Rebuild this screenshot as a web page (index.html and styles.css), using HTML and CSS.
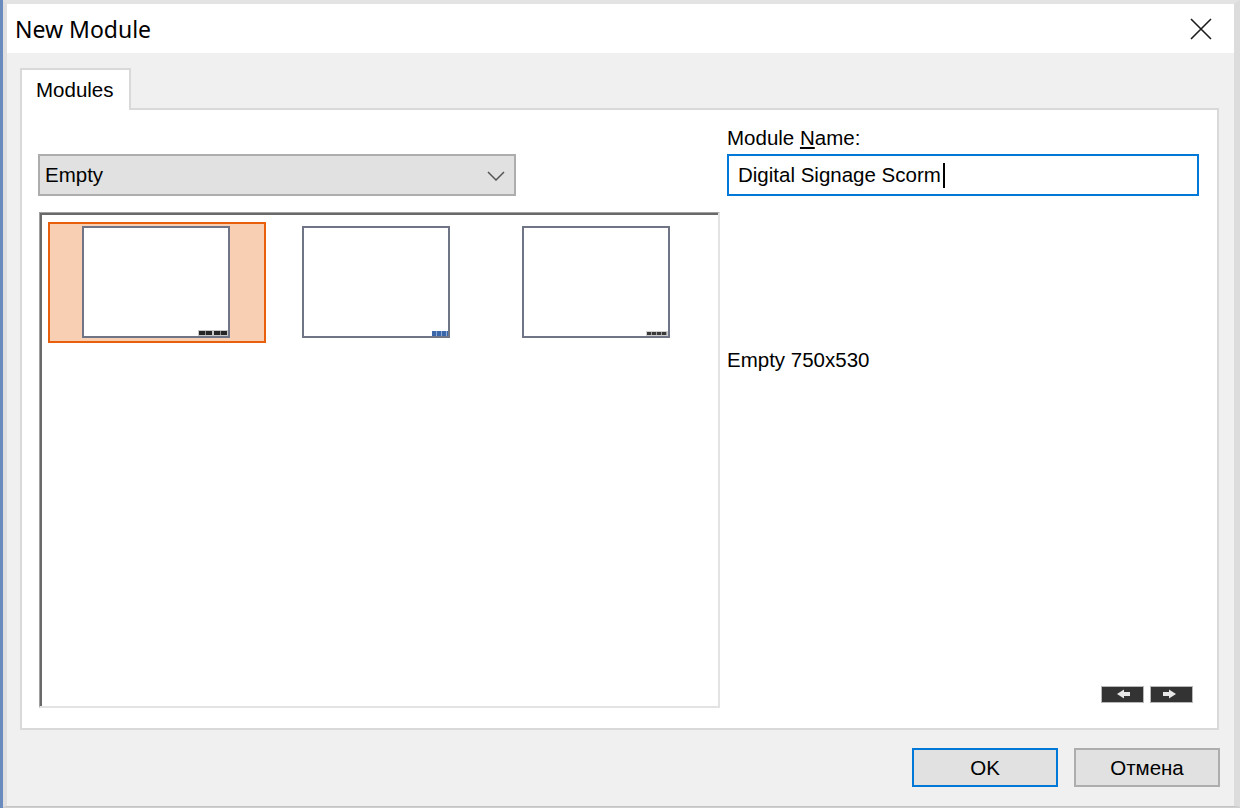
FILE: index.html
```html
<!DOCTYPE html>
<html lang="en">
<head>
<meta charset="utf-8">
<title>New Module</title>
<link rel="stylesheet" href="styles.css">
</head>
<body>
<div class="desk">
  <div class="strip"></div>
  <div class="window">
    <div class="titlebar">
      <span class="title">New Module</span>
      <div class="close">
        <svg width="22" height="22" viewBox="0 0 22 22"><path d="M1 1 L21 21 M21 1 L1 21" stroke="#1b1b1b" stroke-width="1.6" fill="none"/></svg>
      </div>
    </div>
    <div class="body">
      <div class="tabs"><div class="tab">Modules</div></div>
      <div class="panel">
        <div class="left">
          <div class="combo">
            <span>Empty</span>
            <svg class="chev" width="18" height="10" viewBox="0 0 18 10"><path d="M1 1 L9 9 L17 1" stroke="#555" stroke-width="1.5" fill="none"/></svg>
          </div>
          <div class="list">
            <div class="item selected"><div class="thumb"><span class="dots dark"></span></div></div>
            <div class="item"><div class="thumb"><span class="dots blue"></span></div></div>
            <div class="item"><div class="thumb"><span class="dots gray"></span></div></div>
          </div>
        </div>
        <div class="right">
          <div class="label">Module <u>N</u>ame:</div>
          <div class="input"><span>Digital Signage Scorm</span><span class="caret"></span></div>
          <div class="desc">Empty 750x530</div>
          <div class="nav">
            <span class="navbtn"><svg width="41" height="15" viewBox="0 0 41 15"><polygon points="15,7 22,2.5 22,11.5" fill="#e8e8e8"/><rect x="22" y="5" width="6" height="4" fill="#e8e8e8"/></svg></span>
            <span class="navbtn"><svg width="41" height="15" viewBox="0 0 41 15"><rect x="12" y="5" width="6" height="4" fill="#e8e8e8"/><polygon points="18,2.5 25,7 18,11.5" fill="#e8e8e8"/></svg></span>
          </div>
        </div>
      </div>
      <div class="footer">
        <button class="btn default">OK</button>
        <button class="btn">Отмена</button>
      </div>
    </div>
  </div>
</div>
</body>
</html>
```
FILE: styles.css
```css
* { box-sizing: border-box; }
html, body { margin: 0; padding: 0; }
body {
  width: 1240px;
  height: 808px;
  overflow: hidden;
  background: #cfcfcf;
  font-family: "Liberation Sans", Arial, sans-serif;
  font-size: 20.5px;
  color: #000;
}
.desk { display: flex; height: 808px; }
.strip { width: 3px; background: #6a8bbd; flex: none; }
.window {
  flex: none;
  width: 1237px;
  height: 807px;
  border-top: 4px solid #e3e3e3;
  border-left: 4px solid #e0e0e0;
  border-right: 6px solid #dcdcdc;
  border-bottom: 1px solid #c4c4c4;
  display: flex;
  flex-direction: column;
  background: #f0f0f0;
}
.titlebar {
  height: 49px;
  background: #fff;
  display: flex;
  align-items: center;
  justify-content: space-between;
  padding-left: 8px;
  flex: none;
}
.title {
  font-family: "Noto Sans", "Open Sans", sans-serif;
  font-size: 23px;
  color: #000;
}
.close {
  width: 56px;
  height: 49px;
  display: flex;
  align-items: center;
  justify-content: flex-start;
  padding-left: 12px;
}
.body {
  flex: 1;
  display: flex;
  flex-direction: column;
  padding: 15px 15px 0 13px;
}
.tabs { display: flex; position: relative; z-index: 1; margin-bottom: -2px; }
.tab {
  width: 111px;
  height: 42px;
  background: #fff;
  border: 2px solid #d9d9d9;
  border-bottom: none;
  padding-left: 14px;
  display: flex;
  align-items: center;
}
.panel {
  height: 622px;
  background: #fff;
  border: 2px solid #d9d9d9;
  display: flex;
  padding: 0 17px 20px 16px;
}
.left {
  width: 682px;
  display: flex;
  flex-direction: column;
  padding-top: 44px;
}
.combo {
  width: 478px;
  height: 42px;
  background: #e1e1e1;
  border: 2px solid #adadad;
  display: flex;
  align-items: center;
  justify-content: space-between;
  padding: 0 9px 0 5px;
}
.chev { margin-top: 1px; }
.list {
  margin-top: 16px;
  margin-left: 1px;
  flex: 1;
  border-top: 1px solid #a0a0a0;
  border-left: 1px solid #a0a0a0;
  border-right: 2px solid #e3e3e3;
  border-bottom: 2px solid #e3e3e3;
  box-shadow: inset 2px 2px 0 #696969;
  display: flex;
  align-items: flex-start;
  gap: 2px;
  padding: 9px 0 0 8px;
}
.item {
  width: 218px;
  height: 121px;
  border: 2px solid transparent;
  padding: 2px 0 0 32px;
}
.item.selected { border-color: #e8600c; background: #f9cfb3; }
.thumb {
  position: relative;
  width: 148px;
  height: 112px;
  border: 2px solid #6f7487;
  background: #fff;
}
.dots {
  position: absolute;
  right: 0;
  bottom: 0;
  height: 6px;
}
.dots.dark {
  width: 30px;
  background: #c8c8c8;
  border: 1px solid #c8c8c8;
  background-image: repeating-linear-gradient(90deg, #262626 0 6px, #8d8d8d 6px 7px, #262626 7px 13px, #c8c8c8 13px 15px);
}
.dots.blue {
  width: 16px;
  height: 5px;
  background: repeating-linear-gradient(90deg, #3a66aa 0 4px, #8eaad6 4px 5px);
}
.dots.gray {
  width: 22px;
  height: 5px;
  border: 1px solid #d0d0d0;
  background: repeating-linear-gradient(90deg, #3a3a3a 0 4px, #a0a0a0 4px 5px);
}
.right {
  flex: 1;
  margin-left: 7px;
  display: flex;
  flex-direction: column;
  padding-top: 16px;
}
.label { line-height: 24px; height: 24px; }
.label u { text-underline-offset: 2px; }
.input {
  margin-top: 4px;
  width: 472px;
  height: 42px;
  border: 2px solid #0078d7;
  display: flex;
  align-items: center;
  padding-left: 9px;
}
.caret {
  display: inline-block;
  width: 2px;
  height: 25px;
  background: #000;
  margin-left: 2px;
}
.desc { margin-top: 152px; line-height: 24px; }
.nav {
  margin-top: auto;
  margin-bottom: 5px;
  align-self: flex-end;
  margin-right: 7px;
  display: flex;
  gap: 6px;
}
.navbtn {
  width: 43px;
  height: 17px;
  background: #333;
  border: 1px solid #b8b8b8;
  display: block;
}
.navbtn svg { display: block; }
.footer {
  display: flex;
  justify-content: flex-end;
  gap: 16px;
  padding-top: 18px;
  margin-right: -1px;
}
.btn {
  width: 146px;
  height: 39px;
  background: #e1e1e1;
  border: 2px solid #adadad;
  font-family: "Liberation Sans", Arial, sans-serif;
  font-size: 20.5px;
  color: #000;
  padding: 0;
}
.btn.default { border-color: #0078d7; }
```
